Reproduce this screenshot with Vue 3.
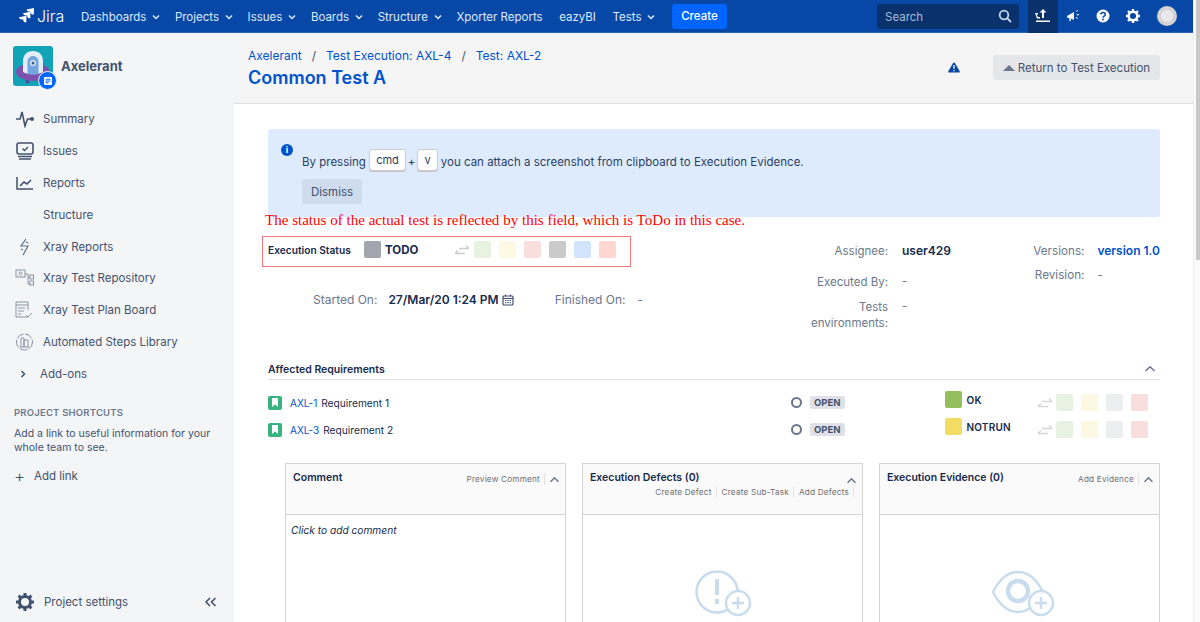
<template>
  <div class="page">
    <div class="app">
      <header class="topbar">
        <a class="logo">
          <svg width="17" height="16" viewBox="0 0 17 16"><path d="M16 0L8.500 1.500c.4 1.500 1.600 2.300 3 2.100l1 -.2.200 1c.3 1.500 1.600 2.400 3.100 2.100zM12.500 3.800L5 5.300c.4 1.500 1.600 2.300 3 2.100l1-.2.200 1c.3 1.500 1.600 2.400 3.100 2.100zM8.500 7.800L1 9.300c.4 1.500 1.600 2.300 3 2.100l1-.2.200 1c.3 1.500 1.600 2.400 3.100 2.100z" fill="#fff"/></svg>
          <span>Jira</span>
        </a>
        <nav class="nav">
          <a v-for="item in navItems" :key="item.label" class="nav-item" :class="item.menu ? '' : 'plain'">
            {{ item.label }}
            <svg v-if="item.menu" width="8" height="6" viewBox="0 0 8 6"><path d="M1 1.500l3 3 3-3" fill="none" stroke="#deebff" stroke-width="1.500"/></svg>
          </a>
        </nav>
        <button class="create">Create</button>
        <div class="search">
          <span>Search</span>
          <svg width="14" height="14" viewBox="0 0 14 14"><circle cx="6" cy="6" r="4.300" fill="none" stroke="#c5d5ea" stroke-width="1.800"/><path d="M9.200 9.200L13 13" stroke="#c5d5ea" stroke-width="1.800"/></svg>
        </div>
        <div class="tools">
          <span class="tool active">
            <svg width="16" height="14" viewBox="0 0 16 14"><path d="M8 0l3.500 3.500H9V9H7V3.500H4.500zM0 4h3v1.500H1.500L3 8H5v1.500H2zM1 11.500h14V13H1z" fill="#fff"/></svg>
          </span>
          <span class="tool">
            <svg width="14" height="14" viewBox="0 0 14 14"><path d="M1 7l7-4v8L5 9.500 4.500 12H3.200L3.500 9H1.500zM10 2l1.500-1 .5.700-1.500 1zM10.500 5.500l2.500-.5.200.9-2.500.5zM10 8l2 1-.4.800-2-1z" fill="#fff"/></svg>
          </span>
          <span class="tool">
            <svg width="14" height="14" viewBox="0 0 14 14"><circle cx="7" cy="7" r="6.500" fill="#fff"/><path d="M4.800 5.400C4.900 4.100 5.900 3.500 7 3.500c1.300 0 2.300.8 2.300 1.900 0 1.700-2.300 1.700-2.300 3.300" fill="none" stroke="#0747a6" stroke-width="1.500"/><circle cx="7" cy="10.500" r=".9" fill="#0747a6"/></svg>
          </span>
          <span class="tool">
            <svg width="14" height="14" viewBox="0 0 18 18"><circle cx="9" cy="9" r="5.500" fill="none" stroke="#fff" stroke-width="3.200"/><path d="M9 0v3M9 15v3M0 9h3M15 9h3M2.600 2.600l2.100 2.100M13.300 13.300l2.100 2.100M2.600 15.400l2.100-2.100M13.300 4.700l2.100-2.100" stroke="#fff" stroke-width="3"/></svg>
          </span>
          <span class="avatar"><span class="avatar-face"></span></span>
        </div>
      </header>

      <div class="body">
        <aside class="sidebar">
          <div class="project">
            <div class="project-logo">
              <svg width="40" height="40" viewBox="0 0 40 40">
                <rect width="40" height="40" rx="3" fill="#13a3b6"/>
                <path d="M12 34l2 4 3-3zM24 35l3 3 2-4z" fill="#5a3a92"/>
                <ellipse cx="20" cy="26" rx="17" ry="9" fill="#7c50ad"/>
                <path d="M10 26V15C10 9 14 5 20 5s10 4 10 10v11c-5 3-15 3-20 0z" fill="#e3edf8"/>
                <path d="M14.500 28V16c0-3.500 2.300-6 5.500-6s5.500 2.500 5.500 6v12c-3 .7-8 .7-11 0z" fill="#74a5e0"/>
                <circle cx="20" cy="17" r="3" fill="#dbe8f6"/>
                <circle cx="20" cy="17" r="1.500" fill="#35588c"/>
              </svg>
              <span class="project-badge">
                <svg width="10" height="10" viewBox="0 0 10 10"><rect x="1" y="1" width="8" height="8" rx="1" fill="#fff"/><path d="M2.500 3.200h5M2.500 5h5M2.500 6.800h3" stroke="#0065ff"/></svg>
              </span>
            </div>
            <span class="project-name">Axelerant</span>
          </div>

          <ul class="menu">
            <li v-for="item in sideItems" :key="item.label" class="menu-item">
              <span class="menu-icon" v-html="item.icon"></span>
              {{ item.label }}
            </li>
            <li class="menu-item addons">
              <svg width="6" height="8" viewBox="0 0 6 8"><path d="M1.500 1l3 3-3 3" fill="none" stroke="#42526e" stroke-width="1.500"/></svg>
              Add-ons
            </li>
          </ul>

          <div class="shortcuts">
            <h4>PROJECT SHORTCUTS</h4>
            <p>Add a link to useful information for your whole team to see.</p>
            <a class="add-link"><span>+</span>Add link</a>
          </div>

          <div class="settings">
            <svg width="18" height="18" viewBox="0 0 18 18"><circle cx="9" cy="9" r="5.500" fill="none" stroke="#42526e" stroke-width="3"/><path d="M9 0v3M9 15v3M0 9h3M15 9h3M2.600 2.600l2.100 2.100M13.300 13.300l2.100 2.100M2.600 15.400l2.100-2.100M13.300 4.700l2.100-2.100" stroke="#42526e" stroke-width="3"/></svg>
            <span>Project settings</span>
            <svg class="collapse" width="13" height="10" viewBox="0 0 13 10"><path d="M6 1L2 5l4 4M11.500 1l-4 4 4 4" fill="none" stroke="#42526e" stroke-width="1.600"/></svg>
          </div>
        </aside>

        <main class="main">
          <div class="head">
            <div class="head-left">
              <div class="crumbs">
                <a>Axelerant</a><i>/</i><a>Test Execution: AXL-4</a><i>/</i><a>Test: AXL-2</a>
              </div>
              <h1>Common Test A</h1>
            </div>
            <svg class="warn" width="12" height="11" viewBox="0 0 12 11"><path d="M6 .5c.4 0 .7.200.9.600l4.800 8.200c.3.600-.1 1.300-.8 1.300H1.100c-.7 0-1.100-.7-.8-1.300L5.100 1.100C5.300.7 5.600.5 6 .5z" fill="#0747a6"/><path d="M6 3v3.800M6 8v1.200" stroke="#fff" stroke-width="1.300"/></svg>
            <button class="return"><span class="up"></span>Return to Test Execution</button>
          </div>

          <div class="content">
            <div class="notice">
              <span class="info">i</span>
              <div>
                <p>By pressing <kbd>cmd</kbd><b>+</b><kbd>v</kbd> you can attach a screenshot from clipboard to Execution Evidence.</p>
                <button class="dismiss">Dismiss</button>
              </div>
            </div>

            <p class="annotation">The status of the actual test is reflected by this field, which is ToDo in this case.</p>

            <div class="details">
              <div class="details-left">
                <div class="status-box">
                  <span class="status-label">Execution Status</span>
                  <span class="swatch todo"></span>
                  <strong>TODO</strong>
                  <svg class="swap" width="16" height="12" viewBox="0 0 16 12"><path d="M1 8.500h10M1 8.500l3-3M15 3.500H5M15 3.500l-3-3" transform="translate(0 1)" fill="none" stroke="#ccc" stroke-width="1.500"/></svg>
                  <span v-for="c in statusChoices" :key="c" class="swatch" :style="{ background: c }"></span>
                </div>
                <div class="dates">
                  <span class="lbl">Started On:</span>
                  <strong>27/Mar/20 1:24 PM</strong>
                  <svg width="12" height="12" viewBox="0 0 12 12"><rect x="1" y="2" width="10" height="9" rx="1" fill="none" stroke="#42526e" stroke-width="1.200"/><path d="M1 4.500h10M3.500 .5v2M8.500 .5v2M3 6.500h1.500M5.300 6.500h1.500M7.600 6.500h1.500M3 8.700h1.500M5.300 8.700h1.500M7.600 8.700h1.500" stroke="#42526e"/></svg>
                  <span class="lbl finished">Finished On:</span>
                  <span class="lbl">-</span>
                </div>
              </div>
              <div class="people">
                <span class="lbl first">Assignee:</span><strong class="first">user429</strong>
                <span class="lbl">Executed By:</span><span class="lbl">-</span>
                <span class="lbl">Tests<br>environments:</span><span class="lbl">-</span>
              </div>
              <div class="versions">
                <span class="lbl">Versions:</span><a>version 1.0</a>
                <span class="lbl">Revision:</span><span class="lbl">-</span>
              </div>
            </div>

            <section class="requirements">
              <div class="req-title">
                <span>Affected Requirements</span>
                <svg width="12" height="8" viewBox="0 0 12 8"><path d="M1.500 6L6 1.800 10.500 6" fill="none" stroke="#6b778c" stroke-width="1.500"/></svg>
              </div>
              <div v-for="req in requirements" :key="req.key" class="req-row">
                <div class="req-main">
                  <span class="story"><svg width="8" height="9" viewBox="0 0 8 9"><path d="M1 0h6v9L4 6.500 1 9z" fill="#fff"/></svg></span>
                  <a>{{ req.key }}</a>
                  <span class="req-name">{{ req.name }}</span>
                </div>
                <span class="ring"></span>
                <span class="lozenge">OPEN</span>
                <div class="req-status">
                  <span class="swatch" :style="{ background: req.color }"></span>
                  <strong>{{ req.status }}</strong>
                </div>
                <svg class="swap" width="16" height="12" viewBox="0 0 16 12"><path d="M1 8.500h10M1 8.500l3-3M15 3.500H5M15 3.500l-3-3" transform="translate(0 1)" fill="none" stroke="#d5d5d5" stroke-width="1.500"/></svg>
                <span v-for="c in reqChoices" :key="c" class="swatch small-gap" :style="{ background: c }"></span>
              </div>
            </section>

            <section class="panels">
              <div class="panel">
                <div class="panel-head">
                  <h5>Comment</h5>
                  <div class="panel-actions"><a>Preview Comment</a><svg width="11" height="7" viewBox="0 0 12 8"><path d="M1.500 6.500L6 2l4.500 4.500" fill="none" stroke="#6b778c" stroke-width="1.800"/></svg></div>
                </div>
                <div class="panel-body"><em>Click to add comment</em></div>
              </div>
              <div class="panel">
                <div class="panel-head stacked">
                  <div class="panel-row">
                    <h5>Execution Defects (0)</h5>
                    <svg width="11" height="7" viewBox="0 0 12 8"><path d="M1.500 6.500L6 2l4.500 4.500" fill="none" stroke="#6b778c" stroke-width="1.800"/></svg>
                  </div>
                  <div class="panel-links"><a>Create Defect</a><a>Create Sub-Task</a><a>Add Defects</a></div>
                </div>
                <div class="panel-body centered">
                  <svg width="58" height="47" viewBox="0 0 58 47">
                    <circle cx="23" cy="22" r="20.500" fill="none" stroke="#c9dcee" stroke-width="2.500"/>
                    <path d="M23 9v16M23 29v5" stroke="#c9dcee" stroke-width="4"/>
                    <circle cx="44" cy="33" r="12" fill="#fff" stroke="#c9dcee" stroke-width="2.500"/>
                    <path d="M44 27v12M38 33h12" stroke="#c9dcee" stroke-width="2.500"/>
                  </svg>
                </div>
              </div>
              <div class="panel">
                <div class="panel-head">
                  <h5>Execution Evidence (0)</h5>
                  <div class="panel-actions"><a>Add Evidence</a><svg width="11" height="7" viewBox="0 0 12 8"><path d="M1.500 6.500L6 2l4.500 4.500" fill="none" stroke="#6b778c" stroke-width="1.800"/></svg></div>
                </div>
                <div class="panel-body centered eye">
                  <svg width="64" height="47" viewBox="0 0 64 47">
                    <path d="M2 22C9 8 18 2 27 2s18 6 25 20c-7 14-16 20-25 20S9 36 2 22z" fill="none" stroke="#c9dcee" stroke-width="2.500"/>
                    <circle cx="27" cy="21" r="10" fill="none" stroke="#c9dcee" stroke-width="4.500"/>
                    <circle cx="50" cy="33" r="12" fill="#fff" stroke="#c9dcee" stroke-width="2.500"/>
                    <path d="M50 27v12M44 33h12" stroke="#c9dcee" stroke-width="2.500"/>
                  </svg>
                </div>
              </div>
            </section>
          </div>
        </main>
      </div>
    </div>
    <div class="scrollbar"><span></span></div>
  </div>
</template>

<script setup>
const navItems = [
  { label: "Dashboards", menu: true },
  { label: "Projects", menu: true },
  { label: "Issues", menu: true },
  { label: "Boards", menu: true },
  { label: "Structure", menu: true },
  { label: "Xporter Reports" },
  { label: "eazyBI" },
  { label: "Tests", menu: true },
];

const sideItems = [
  {
    label: "Summary",
    icon: '<svg width="20" height="18" viewBox="0 0 20 18"><path d="M1 9h4l2-7 3 14 2.500-7H16" fill="none" stroke="#42526e" stroke-width="1.600"/><circle cx="17" cy="9" r="2" fill="#42526e"/></svg>',
  },
  {
    label: "Issues",
    icon: '<svg width="20" height="18" viewBox="0 0 20 18"><rect x="2" y="1" width="16" height="11" rx="2" fill="none" stroke="#42526e" stroke-width="1.600"/><path d="M7.500 6.500l2 2 3.500-3.500M3 14.500h14M4 17h12" fill="none" stroke="#42526e" stroke-width="1.400"/></svg>',
  },
  {
    label: "Reports",
    icon: '<svg width="20" height="16" viewBox="0 0 20 16"><path d="M2 2v12h16" fill="none" stroke="#42526e" stroke-width="1.500"/><path d="M5 11l4-4 3 2 4-4" fill="none" stroke="#42526e" stroke-width="1.600"/></svg>',
  },
  { label: "Structure", icon: "" },
  {
    label: "Xray Reports",
    icon: '<svg width="12" height="18" viewBox="0 0 12 18"><path d="M7 1L2 8h7l-5 9M7 4l2 1M2 11l2 1" fill="none" stroke="#5e6c84" stroke-width="1.200"/></svg>',
  },
  {
    label: "Xray Test Repository",
    icon: '<svg width="20" height="18" viewBox="0 0 20 18" fill="none" stroke="#8993a4"><rect x="1" y="1" width="9" height="7"/><circle cx="5.500" cy="4.500" r="1.500"/><path d="M10 5h3v10h2M13 8h2"/><rect x="15" y="6" width="3.500" height="4"/><rect x="15" y="12" width="3.500" height="4"/></svg>',
  },
  {
    label: "Xray Test Plan Board",
    icon: '<svg width="20" height="18" viewBox="0 0 20 18" fill="none" stroke="#8993a4"><path d="M13 16H1V1h12v8M1 4h12M3 7h7M3 10h6M3 13h3"/><path d="M11 14l2 2 4-4"/></svg>',
  },
  {
    label: "Automated Steps Library",
    icon: '<svg width="20" height="18" viewBox="0 0 20 18" fill="none" stroke="#8993a4"><circle cx="9.500" cy="9" r="8" stroke-dasharray="8 1.500"/><path d="M6 14V5h3v9M9 14V7h4v7M5 14h9"/></svg>',
  },
];

const statusChoices = ["#e8f2e1", "#fdf9e3", "#f8dedc", "#cacaca", "#d2e4fd", "#ffd6d0"];
const reqChoices = ["#e8f2e1", "#fdf8e2", "#eceef0", "#f8dedc"];

const requirements = [
  { key: "AXL-1", name: "Requirement 1", status: "OK", color: "#93bf5f" },
  { key: "AXL-3", name: "Requirement 2", status: "NOTRUN", color: "#f2dc62" },
];
</script>

<style scoped>
.page {
  width: 1200px;
  height: 622px;
  display: flex;
  overflow: hidden;
  background: #fff;
  font-family: Inter, "Liberation Sans", sans-serif;
  font-size: 11.5px;
  color: #172b4d;
}

.app {
  width: 1193px;
  flex: none;
  display: flex;
  flex-direction: column;
  min-height: 0;
}

.scrollbar {
  flex: 1;
  box-sizing: border-box;
  padding-left: 3px;
  background: #fafafa;
  border-left: 1px solid #eee;
}

.scrollbar span {
  display: block;
  height: 260px;
  margin-left: -1px;
  background: #c8c8c8;
}

.topbar {
  height: 33px;
  flex: none;
  background: #0747a6;
  display: flex;
  align-items: center;
  padding-left: 18px;
  box-sizing: border-box;
  border-bottom: 1px solid #2a62b4;
  color: #deebff;
}

.logo {
  display: flex;
  align-items: center;
  gap: 2px;
  width: 63px;
  color: #fff;
  font-size: 16px;
  font-weight: 300;
}

.nav {
  display: flex;
  gap: 14.500px;
  padding-top: 1px;
}

.nav-item {
  display: flex;
  align-items: center;
  gap: 6px;
  white-space: nowrap;
}

.nav-item.plain {
  margin-right: 2px;
}

.create {
  margin-left: 16.500px;
  width: 55px;
  height: 25px;
  border: 0;
  border-radius: 3px;
  background: #0065ff;
  color: #fff;
  font: 500 11.500px Inter, sans-serif;
}

.search {
  margin-left: auto;
  width: 142px;
  height: 25px;
  box-sizing: border-box;
  padding: 0 7px 0 8px;
  border-radius: 3px;
  background: #09326c;
  display: flex;
  align-items: center;
  justify-content: space-between;
  color: #a5bbd8;
}

.search span {
  padding-top: 1px;
}

.tools {
  display: flex;
  align-items: center;
  margin-left: 9px;
  width: 165px;
}

.tool {
  width: 30px;
  height: 33px;
  display: flex;
  align-items: center;
  justify-content: center;
}

.tool.active {
  background: #09326c;
}

.avatar {
  width: 20px;
  height: 20px;
  margin-left: 9px;
  border-radius: 50%;
  background: #d4d4d4;
  display: flex;
  align-items: center;
  justify-content: center;
}

.avatar-face {
  width: 12px;
  height: 12px;
  border-radius: 50%;
  background: #e9e9e9;
}

.body {
  flex: 1;
  display: flex;
  min-height: 0;
}

.sidebar {
  width: 234px;
  flex: none;
  background: #f4f5f7;
  color: #42526e;
  display: flex;
  flex-direction: column;
  padding: 13px 0 11px;
  box-sizing: border-box;
}

.project {
  display: flex;
  align-items: center;
  gap: 8px;
  padding-left: 13px;
}

.project-logo {
  position: relative;
  width: 40px;
  height: 40px;
}

.project-badge {
  position: absolute;
  right: -4px;
  bottom: -4px;
  width: 17px;
  height: 17px;
  border-radius: 50%;
  background: #0065ff;
  border: 1px solid #f4f5f7;
  display: flex;
  align-items: center;
  justify-content: center;
}

.project-name {
  font-size: 13px;
  font-weight: 700;
}

.menu {
  list-style: none;
  margin: 0;
  padding: 17px 0 0;
}

.menu-item {
  height: 31.900px;
  display: flex;
  align-items: center;
  padding-left: 14px;
  gap: 8px;
  white-space: nowrap;
}

.menu-icon {
  width: 21px;
  display: flex;
  justify-content: center;
}

.addons {
  padding-left: 20px;
  gap: 14px;
}

.shortcuts {
  padding: 17px 14px 0;
}

.shortcuts h4 {
  margin: 0;
  font-size: 9.500px;
  font-weight: 600;
  letter-spacing: .2px;
  color: #6b778c;
}

.shortcuts p {
  margin: 9px 0 0;
  font-size: 10.500px;
  line-height: 14px;
}

.add-link {
  display: flex;
  align-items: center;
  gap: 9px;
  margin-top: 13px;
  font-size: 11.500px;
}

.add-link span {
  font-size: 17px;
  font-weight: 300;
  line-height: 16px;
  width: 11px;
}

.settings {
  margin-top: auto;
  display: flex;
  align-items: center;
  gap: 10px;
  padding: 0 17px 0 16px;
}

.settings .collapse {
  margin-left: auto;
}

.main {
  flex: 1;
  min-width: 0;
  background: #fff;
}

.head {
  height: 71px;
  box-sizing: border-box;
  background: #f5f5f5;
  border-bottom: 1px solid #dfdfdf;
  display: flex;
  align-items: center;
  padding: 8px 33px 10px 14px;
}

.head-left {
  flex: 1;
}

.crumbs {
  color: #0052cc;
  font-size: 12px;
  padding-top: 2px;
}

.crumbs i {
  font-style: normal;
  color: #42526e;
  margin: 0 10px;
}

h1 {
  margin: 4px 0 0;
  font-size: 18px;
  font-weight: 600;
  color: #0052cc;
}

.warn {
  margin-right: 33px;
}

.return {
  width: 167px;
  height: 25px;
  border: 0;
  border-radius: 3px;
  background: #e4e6e9;
  color: #42526e;
  font: 11.500px Inter, sans-serif;
  padding: 1px 0 0;
  display: flex;
  align-items: center;
  justify-content: center;
  gap: 3px;
  white-space: nowrap;
}

.up {
  width: 0;
  height: 0;
  border: 6px solid transparent;
  border-top: 0;
  border-bottom: 6px solid #6b778c;
}

.content {
  padding: 25px 33px 0 34px;
}

.notice {
  height: 88px;
  box-sizing: border-box;
  background: #deebff;
  border-radius: 3px;
  display: flex;
  padding: 14px 13px;
  gap: 9px;
  color: #2c3f5f;
}

.info {
  width: 12px;
  height: 12px;
  margin-top: 1px;
  border-radius: 50%;
  background: #0052cc;
  color: #fff;
  font-size: 9px;
  font-weight: 700;
  text-align: center;
  line-height: 12px;
  flex: none;
}

.notice p {
  margin: 8px 0 0;
  display: flex;
  align-items: center;
  white-space: pre;
}

kbd {
  font: 11px Inter, sans-serif;
  background: #fdfdfd;
  border: 1px solid #ccc;
  border-radius: 3px;
  padding: 3px 6px;
  box-shadow: 0 1px 0 #c5c5c5;
  position: relative;
  top: -2px;
}

.notice b {
  font-weight: 400;
  margin: 0 2px;
}

.dismiss {
  margin-top: 6px;
  width: 60px;
  height: 25px;
  border: 0;
  border-radius: 3px;
  background: #cfdcee;
  color: #42526e;
  font: 11.500px Inter, sans-serif;
}

.annotation {
  margin: -5px 0 0 -3px;
  position: relative;
  font-family: "Liberation Serif", serif;
  font-size: 15.050px;
  color: #f00;
  line-height: 17px;
  white-space: nowrap;
}

.details {
  display: flex;
  margin-top: 7px;
  height: 108px;
}

.details-left {
  width: 480px;
}

.status-box {
  margin-left: -6px;
  width: 369px;
  height: 31px;
  box-sizing: border-box;
  border: 1px solid #ee7777;
  display: flex;
  align-items: center;
  padding: 0 0 4px 5px;
  gap: 8px;
}

.status-label {
  width: 88px;
  font-size: 10.200px;
  font-weight: 600;
  white-space: nowrap;
}

.status-box strong {
  width: 62px;
  margin-left: -4px;
  font-size: 11.500px;
  font-weight: 700;
}

.swatch {
  width: 17px;
  height: 17px;
  flex: none;
  border-radius: 2px;
}

.todo {
  background: #a2a5ae;
}

.status-box .swap {
  margin-left: -1px;
  margin-right: -4px;
}

.dates {
  display: flex;
  align-items: center;
  gap: 3px;
  margin: 25px 0 0 45px;
}

.dates .lbl {
  font-size: 12px;
}

.dates strong {
  margin-left: 8px;
  font-size: 12px;
  font-weight: 600;
  white-space: nowrap;
}

.finished {
  margin-left: 38px;
  margin-right: 9px;
}

.lbl {
  color: #6b778c;
  font-size: 11.500px;
}

.people {
  width: 204px;
  display: grid;
  grid-template-columns: 140px 1fr;
  column-gap: 14px;
  row-gap: 9px;
  align-items: start;
  align-content: start;
  padding-top: 7px;
}

.people .first {
  margin-bottom: 6px;
}

.people > .lbl:nth-child(odd) {
  text-align: right;
  line-height: 16px;
}

.people strong {
  font-size: 12px;
  font-weight: 600;
  line-height: 16px;
}

.versions {
  margin-left: auto;
  display: grid;
  grid-template-columns: auto auto;
  column-gap: 13px;
  row-gap: 10px;
  align-content: start;
  padding-top: 8px;
  white-space: nowrap;
}

.versions .lbl {
  font-size: 11.700px;
  line-height: 14px;
}

.versions > .lbl:nth-child(odd) {
  text-align: right;
}

.versions a {
  color: #0052cc;
  font-size: 12px;
  font-weight: 600;
  line-height: 14px;
}

.requirements {
  margin-top: 14px;
}

.req-title {
  display: flex;
  justify-content: space-between;
  align-items: center;
  height: 22px;
  box-sizing: border-box;
  border-bottom: 1px solid #e3e3e3;
  font-size: 10.500px;
  font-weight: 600;
  padding: 1px 4px 0 0;
}

.req-row {
  display: flex;
  align-items: center;
  height: 27px;
  font-size: 10px;
  white-space: nowrap;
}

.req-title + .req-row {
  margin-top: 9px;
}

.req-row a {
  color: #0052cc;
}

.req-main {
  width: 523px;
  flex: none;
  display: flex;
  align-items: center;
}

.story {
  width: 14px;
  height: 14px;
  border-radius: 2px;
  background: #36b37e;
  display: flex;
  align-items: center;
  justify-content: center;
  margin-right: 8px;
}

.req-name {
  margin-left: 4px;
  font-size: 10.200px;
}

.ring {
  width: 7px;
  height: 7px;
  border: 2px solid #6b778c;
  border-radius: 50%;
  margin-right: 8px;
}

.lozenge {
  background: #dfe1e6;
  color: #42526e;
  font-size: 9.500px;
  font-weight: 700;
  border-radius: 2px;
  padding: 1px 4px;
  letter-spacing: 0;
}

.req-status {
  width: 92px;
  margin-left: 100px;
  display: flex;
  align-items: center;
  gap: 5px;
  position: relative;
  top: -3px;
}

.req-status strong {
  font-size: 10px;
  font-weight: 600;
  letter-spacing: .2px;
}

.req-row .swap {
  margin-right: 3px;
}

.small-gap {
  margin-right: 8px;
}

.panels {
  margin: 20px -1px 0 17px;
  display: grid;
  grid-template-columns: repeat(3, 281px);
  column-gap: 16px;
}

.panel {
  height: 200px;
  border: 1px solid #d4d4d4;
  border-bottom: 0;
  box-sizing: border-box;
}

.panel-head {
  height: 51px;
  box-sizing: border-box;
  background: #fafafa;
  border-bottom: 1px solid #d4d4d4;
  display: flex;
  justify-content: space-between;
  padding: 7px 5px 0 7px;
}

.panel-head.stacked {
  display: block;
}

.panel-row {
  display: flex;
  justify-content: space-between;
}

.panel-row svg {
  margin-top: 6px;
}

h5 {
  margin: 0;
  font-size: 10.500px;
  font-weight: 600;
  line-height: 13px;
}

.panel-actions {
  display: flex;
  align-items: center;
  gap: 4px;
  height: 16px;
}

.panel-actions a,
.panel-links a {
  font-size: 8.200px;
  color: #6f6f6f;
  letter-spacing: .2px;
  white-space: nowrap;
}

.panel-actions a {
  border-right: 1px solid #e3e3e3;
  padding-right: 4px;
  line-height: 12px;
}

.panel-links {
  display: flex;
  justify-content: flex-end;
  margin-top: 3px;
  padding-right: 3px;
}

.panel-links a {
  border-right: 1px solid #e3e3e3;
  padding: 0 4px 0 5px;
}

.panel-body {
  padding: 9px 5px;
  font-size: 10.200px;
}

.panel-body.centered {
  padding: 55px 0 0;
  display: flex;
  justify-content: center;
}

.panel-body.eye {
  padding-left: 6px;
}
</style>

<style>
html,
body {
  background: #fff;
  overflow: hidden;
}
</style>
